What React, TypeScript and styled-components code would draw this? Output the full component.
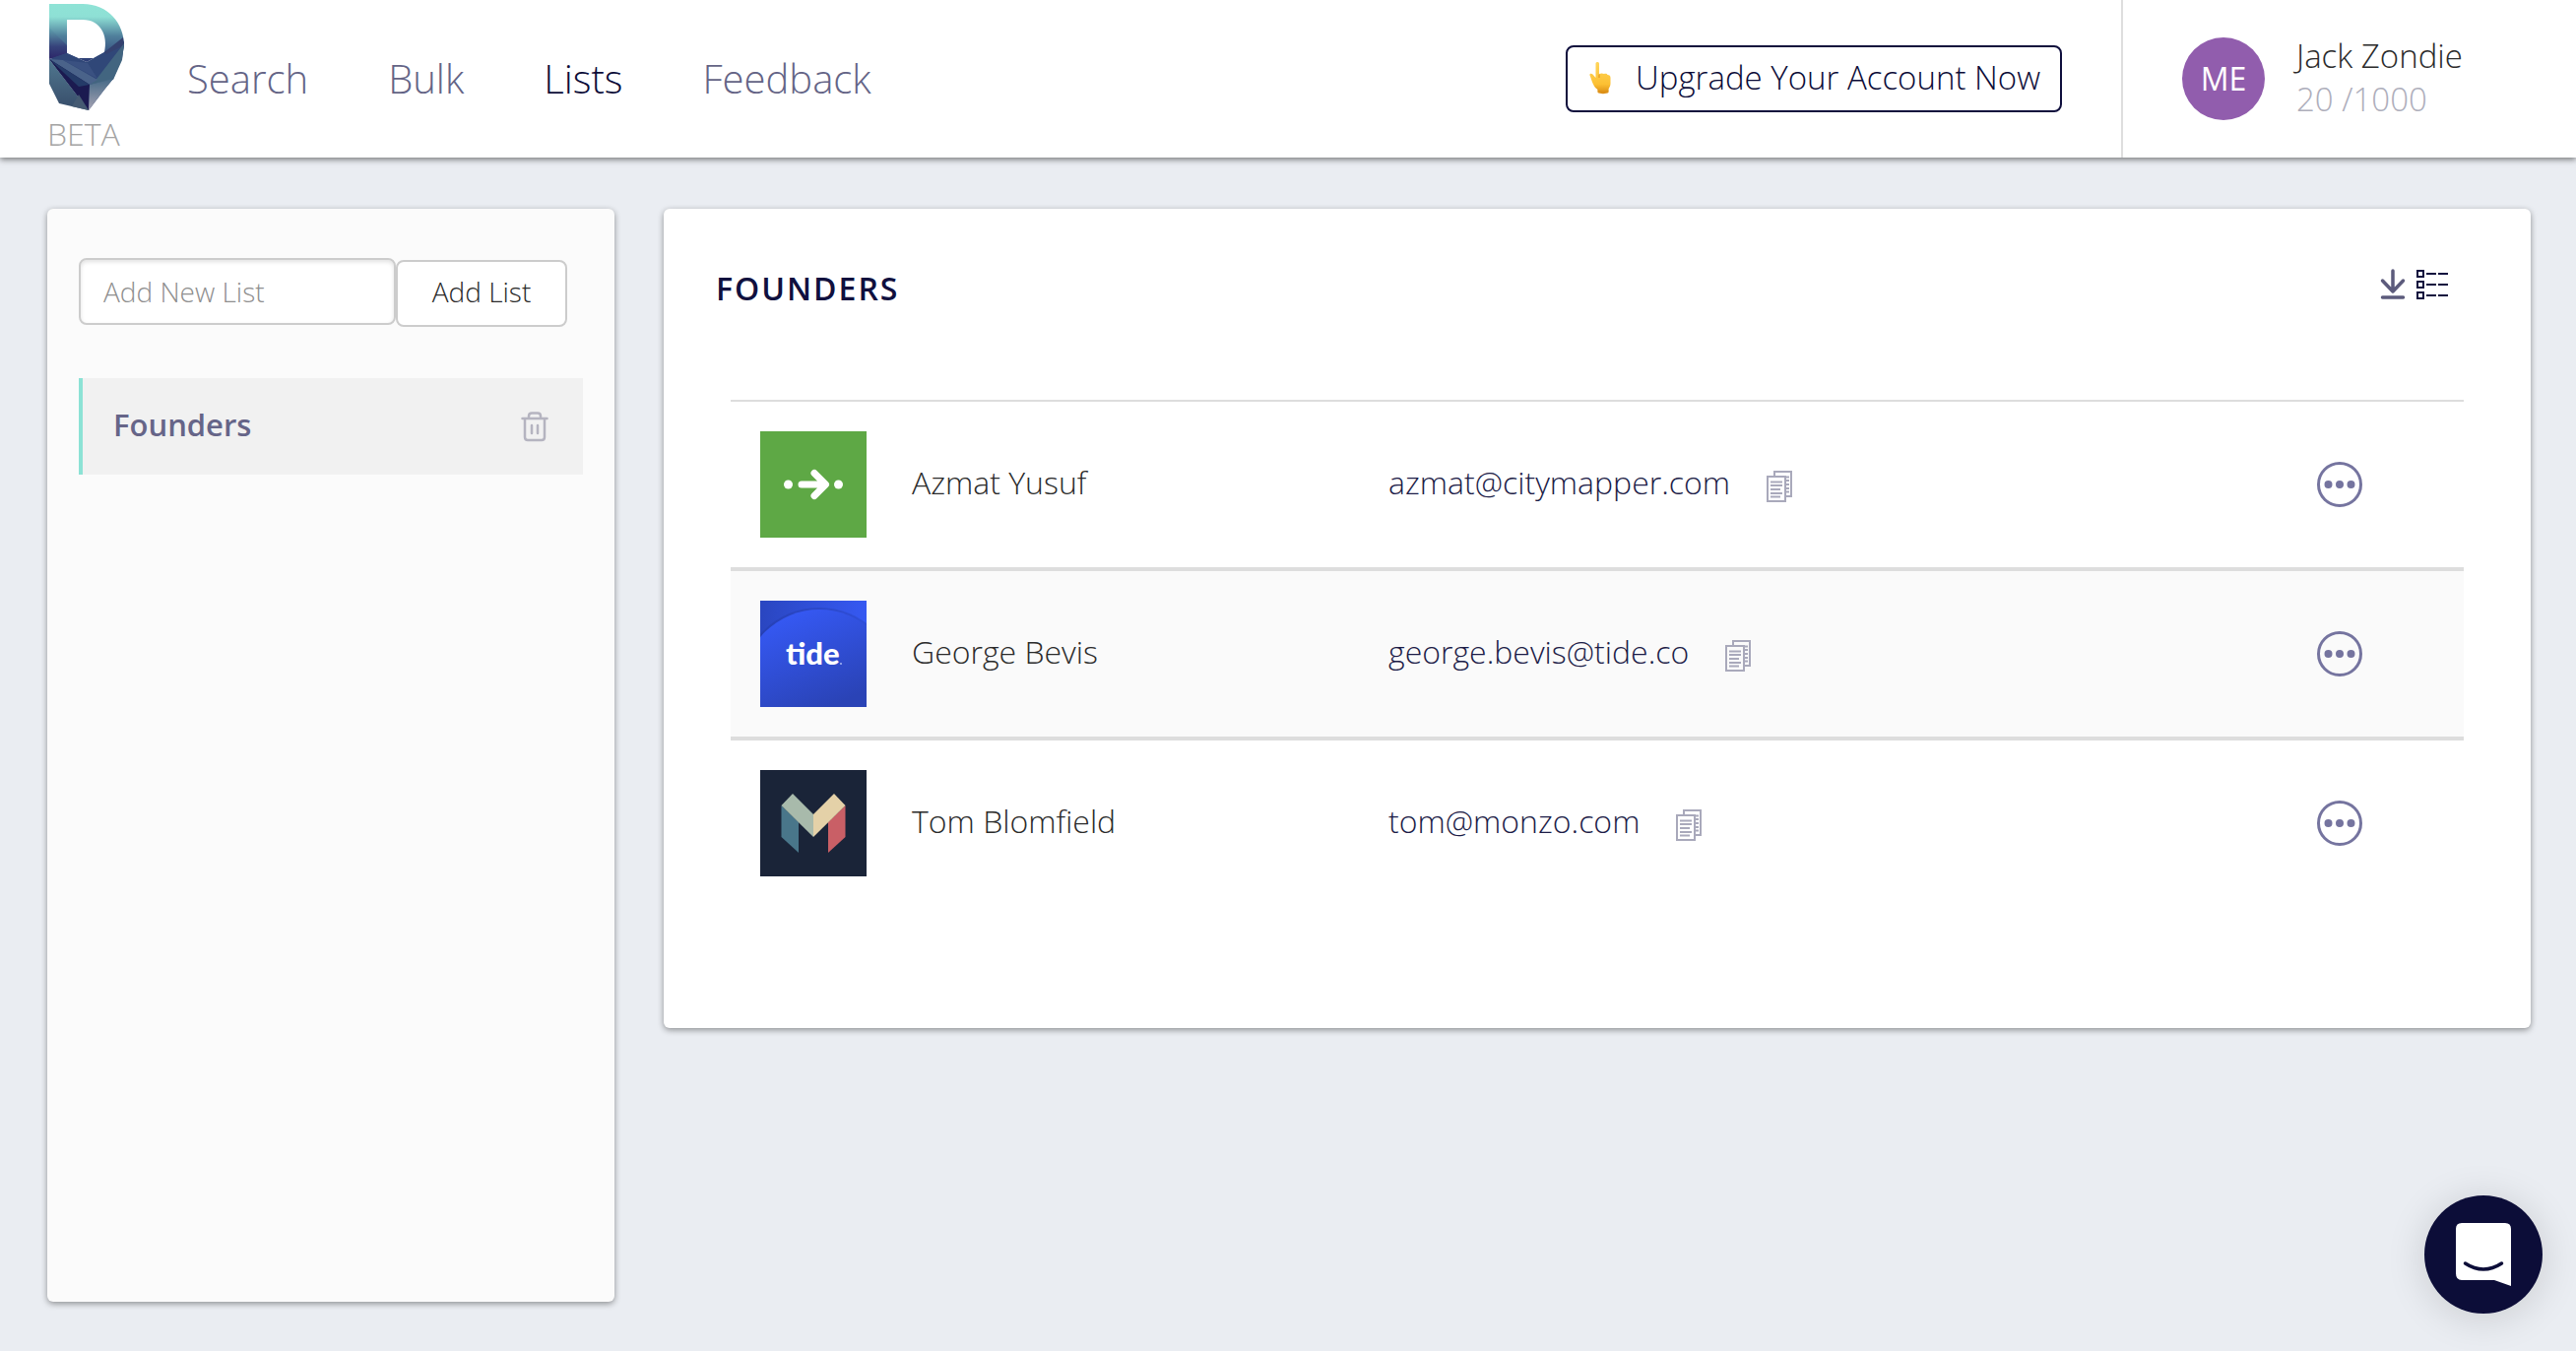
import React from "react";
import styled, { createGlobalStyle } from "styled-components";

const GlobalStyle = createGlobalStyle`
  *, *::before, *::after { box-sizing: border-box; }
  body {
    margin: 0;
    background: #eaedf2;
    color: #2b2b2b;
    font-family: "Open Sans", "Noto Sans", sans-serif;
    font-size: 32px;
    font-weight: 300;
    line-height: 44px;
  }
  button, input { font: inherit; color: inherit; }
  button { cursor: pointer; }
  svg { display: block; }
`;

const shadow = "0 2px 6px rgba(0, 0, 0, 0.4)";

const Page = styled.div`
  display: flex;
  flex-direction: column;
  min-height: 100vh;
`;

const Header = styled.header`
  display: flex;
  align-items: stretch;
  height: 160px;
  background: #ffffff;
  box-shadow: 0 2px 6px rgba(0, 0, 0, 0.5);
`;

const Brand = styled.a`
  display: flex;
  flex-direction: column;
  gap: 1px;
  width: 139px;
  padding: 4px 0 0 50px;
  color: #a4a4a4;
  text-decoration: none;
`;

const BrandLabel = styled.span`
  margin-left: -2px;
`;

const Nav = styled.nav`
  display: flex;
  flex: 1;
  align-items: center;
  gap: 81px;
  padding-left: 51px;
`;

const NavLink = styled.a<{ $active?: boolean }>`
  color: ${(p) => (p.$active ? "#0c0c38" : "#646486")};
  font-size: 40px;
  text-decoration: none;
`;

const UpgradeButton = styled.button`
  display: flex;
  align-items: center;
  align-self: center;
  justify-content: space-between;
  width: 504px;
  height: 68px;
  padding: 0 20px 2px 22px;
  border: 2px solid #0e0e3c;
  border-radius: 8px;
  background: #ffffff;
  color: #0c0c38;
  font-size: 33px;
`;

const Account = styled.div`
  display: flex;
  align-items: center;
  gap: 32px;
  width: 462px;
  margin-left: 60px;
  padding-left: 60px;
  border-left: 2px solid #dedede;
`;

const Avatar = styled.span`
  display: flex;
  align-items: center;
  justify-content: center;
  width: 84px;
  height: 84px;
  border-radius: 50%;
  background: #915dad;
  color: #ffffff;
  font-weight: 400;
`;

const Owner = styled.div`
  padding-bottom: 2px;
  font-size: 33px;
`;

const Credits = styled.div`
  color: #aeaebb;
`;

const Content = styled.main`
  display: grid;
  flex: 1;
  grid-template-columns: 576px minmax(0, 1fr);
  gap: 50px;
  padding: 52px 46px 50px 48px;
`;

const Sidebar = styled.aside`
  padding: 50px 32px;
  border-radius: 6px;
  background: #fbfbfb;
  box-shadow: ${shadow};
`;

const AddForm = styled.form`
  display: flex;
`;

const ListInput = styled.input`
  width: 322px;
  height: 68px;
  padding: 0 23px;
  border: 2px solid #cccccc;
  border-radius: 8px;
  background: #ffffff;
  box-shadow: inset 0 2px 4px rgba(0, 0, 0, 0.12);
  font-size: 28px;
  &::placeholder { color: #8f8f8f; opacity: 1; }
`;

const AddButton = styled.button`
  width: 174px;
  height: 68px;
  margin-top: 2px;
  padding: 0 0 4px;
  border: 2px solid #cccccc;
  border-radius: 8px;
  background: #ffffff;
  font-size: 28px;
`;

const Lists = styled.ul`
  margin: 52px 0 0;
  padding: 0;
  list-style: none;
`;

const ListItem = styled.li`
  display: flex;
  align-items: center;
  justify-content: space-between;
  height: 98px;
  padding: 0 35px 0 31px;
  border-left: 4px solid #8ce2d5;
  background: #f1f1f1;
`;

const ListLink = styled.a`
  padding-bottom: 4px;
  color: #666588;
  font-size: 31px;
  font-weight: 600;
  text-decoration: none;
`;

const IconButton = styled.button`
  display: flex;
  padding: 0;
  border: 0;
  background: none;
`;

const Card = styled.section`
  align-self: start;
  padding: 54px 68px 124px;
  border-radius: 6px;
  background: #ffffff;
  box-shadow: ${shadow};
`;

const CardHeader = styled.div`
  display: flex;
  align-items: center;
  justify-content: space-between;
  height: 54px;
  margin: 0 16px 86px -15px;
`;

const Title = styled.h1`
  margin: 0;
  color: #10103e;
  font-size: 32px;
  font-weight: 600;
  letter-spacing: 2px;
`;

const Tools = styled.div`
  display: flex;
  gap: 11px;
  padding-bottom: 8px;
`;

const Table = styled.table`
  width: 100%;
  border-top: 2px solid #dddddd;
  border-spacing: 0;
  table-layout: fixed;
`;

const LogoColumn = styled.col` width: 184px; `;
const NameColumn = styled.col` width: 27.5%; `;
const ActionColumn = styled.col` width: 149px; `;

const Row = styled.tr`
  &:nth-child(even) { background: #fafafa; }
  &:not(:last-child) > td { border-bottom: 4px solid #dddddd; }
`;

const Cell = styled.td`
  padding: 0;
`;

const LogoCell = styled(Cell)`
  padding: 30px;
`;

const NameCell = styled(Cell)`
  padding-bottom: 4px;
`;

const Email = styled.div`
  display: flex;
  align-items: flex-end;
  gap: 37px;
`;

const EmailLink = styled.a`
  padding-bottom: 4px;
  color: #1d1d48;
  text-decoration: none;
`;

const CopyButton = styled(IconButton)`
  padding-bottom: 6px;
`;

const Tile = styled.div<{ $bg: string }>`
  display: flex;
  align-items: center;
  justify-content: center;
  width: 108px;
  height: 108px;
  background: ${(p) => p.$bg};
`;

const TideWord = styled.text`
  fill: #ffffff;
  font-family: Lato, sans-serif;
  font-size: 31px;
  font-weight: 900;
`;

const Launcher = styled.button`
  position: fixed;
  right: 34px;
  bottom: 38px;
  display: flex;
  align-items: center;
  justify-content: center;
  width: 120px;
  height: 120px;
  padding: 0;
  border: 0;
  border-radius: 50%;
  background: #0c0d38;
  box-shadow: 0 4px 40px rgba(0, 0, 0, 0.14);
`;

const BrandLogo = () => (
  <svg width="76" height="109" viewBox="0 0 76 109" aria-hidden="true">
    <defs>
      <linearGradient id="brand-d" x1="0" y1="0" x2="0" y2="1">
        <stop offset="0" stopColor="#8fe3d6" />
        <stop offset="0.22" stopColor="#8ee0d5" />
        <stop offset="0.55" stopColor="#50809c" />
        <stop offset="1" stopColor="#2b3a73" />
      </linearGradient>
      <linearGradient id="brand-l" x1="0" y1="0" x2="0" y2="1">
        <stop offset="0" stopColor="#62a5b0" />
        <stop offset="0.6" stopColor="#36437b" />
        <stop offset="1" stopColor="#2c2669" />
      </linearGradient>
      <linearGradient id="brand-s" x1="0" y1="0" x2="0" y2="1">
        <stop offset="0" stopColor="#507890" />
        <stop offset="1" stopColor="#374c69" />
      </linearGradient>
      <linearGradient id="brand-t" x1="0" y1="0" x2="0" y2="1">
        <stop offset="0" stopColor="#456987" />
        <stop offset="1" stopColor="#a7a4b3" />
      </linearGradient>
    </defs>
    <path d="M0 0H34C60 0 76 20 76 42L74 55H0ZM18 16V50L38 59L56 49C60 32 52 16 34 16Z" fill="url(#brand-d)" fillRule="evenodd" />
    <path d="M0 24L18 42V50L0 56Z" fill="url(#brand-l)" />
    <path d="M0 56L18 50L38 59L56 49L76 38V42L73 57L65 76L56 87L40 108L0 56Z" fill="#304778" />
    <path d="M56 49L75 34L76 42L58 51Z" fill="#34416f" />
    <path d="M76 40L49 75L41 82L65 77L74 57Z" fill="#426580" />
    <path d="M0 56L14 57L49 77L41 82Z" fill="#4a638a" />
    <path d="M14 57L39 60L49 76Z" fill="#3a5181" />
    <path d="M0 56V81L10 101L40 108Z" fill="url(#brand-s)" />
    <path d="M0 56L41 82L40 108Z" fill="#1b1a50" />
    <path d="M0 56L41 82L30 84Z" fill="#243b68" />
    <path d="M30 92L40 108L23 104Z" fill="#455a72" />
    <path d="M41 82L65 76L56 87L40 108Z" fill="url(#brand-t)" />
  </svg>
);

const HandIcon = () => (
  <svg width="22" height="34" viewBox="0 0 22 34" aria-hidden="true">
    <defs>
      <linearGradient id="hand" x1="0" y1="0" x2="0" y2="1">
        <stop offset="0" stopColor="#ffd65c" />
        <stop offset="0.7" stopColor="#fcc033" />
        <stop offset="1" stopColor="#d98a12" />
      </linearGradient>
    </defs>
    <path d="M6.500 2.500C6.500 0.500 10 0.500 10 2.500V13C12 12 14 12.500 15 13C17 12.500 18 13 18.500 14C20.500 14 21.500 15 21.500 17V23C21.500 26 19.500 27 19.500 29V32C17 33.500 11 33.500 8.500 32V29C4 26 3 21 0.500 14.500C0 12.500 2 12 3.500 13.500L6.500 17Z" fill="url(#hand)" />
    <path d="M10 13.500V17M8.500 30C12 31 16 31 19.500 30" fill="none" stroke="#dd9218" strokeWidth="1" />
  </svg>
);

const TrashIcon = () => (
  <svg width="28" height="31" viewBox="0 0 28 31" fill="none" stroke="#b5b4c0" strokeWidth="2.500" strokeLinecap="round" aria-hidden="true">
    <path d="M1.500 7H26.500M8 7V4.500Q8 1.500 11 1.500H17Q20 1.500 20 4.500V7M4 8V26Q4 29 7 29H21Q24 29 24 26V8M11 14V22M17 14V22" />
  </svg>
);

const DownloadIcon = () => (
  <svg width="26" height="32" viewBox="0 0 26 32" fill="none" stroke="#5c5b7c" strokeWidth="3.500" strokeLinecap="round" strokeLinejoin="round" aria-hidden="true">
    <path d="M13 2V23M2.500 12L13 23L23.500 12M2.500 29H23.500" />
  </svg>
);

const TableIcon = () => (
  <svg width="32" height="32" viewBox="0 0 32 32" fill="none" stroke="#10103e" strokeWidth="2" aria-hidden="true">
    <path d="M1 2H7V8H1ZM1 13H7V19H1ZM1 24H7V30H1Z" />
    <path d="M10 5H20M22 5H32M10 16H20M22 16H32M10 27H20M22 27H32" />
  </svg>
);

const CopyIcon = () => (
  <svg width="26" height="32" viewBox="0 0 26 32" fill="none" stroke="#a9a9bb" strokeWidth="2" aria-hidden="true">
    <path d="M8 5V1H25V26H20M1 6H19V31H1Z" />
    <path d="M4 11.500H16M4 15H16M4 19H14M4 23H16M4 26.500H14M20 6.500H23M20 10H23M20 14H23M20 18H23M20 21.500H23" />
  </svg>
);

const MoreIcon = () => (
  <svg width="46" height="46" viewBox="0 0 46 46" aria-hidden="true">
    <circle cx="23" cy="23" r="21.500" fill="none" stroke="#75749f" strokeWidth="3" />
    <path d="M11.500 23h.01M23 23h.01M34.500 23h.01" stroke="#75749f" strokeWidth="8" strokeLinecap="round" />
  </svg>
);

const CitymapperLogo = () => (
  <Tile $bg="#5ea845">
    <svg width="60" height="32" viewBox="0 0 60 32" aria-hidden="true">
      <circle cx="4.500" cy="16" r="4.500" fill="#fff" />
      <circle cx="55.500" cy="16" r="4.500" fill="#fff" />
      <path d="M18 16H42M31 4.500L42.500 16L31 27.500" fill="none" stroke="#fff" strokeWidth="7" strokeLinecap="round" strokeLinejoin="round" />
    </svg>
  </Tile>
);

const TideLogo = () => (
  <Tile $bg="linear-gradient(90deg, #2a46c0, #3659f2)">
    <svg width="108" height="108" viewBox="0 0 108 108">
      <defs>
        <linearGradient id="tide" gradientUnits="userSpaceOnUse" x1="30" y1="15" x2="70" y2="108">
          <stop offset="0" stopColor="#3558f2" />
          <stop offset="1" stopColor="#2a43b6" />
        </linearGradient>
      </defs>
      <circle cx="60" cy="87" r="80" fill="#1d3190" opacity="0.25" />
      <circle cx="60" cy="87" r="78" fill="url(#tide)" />
      <TideWord x="26" y="65">tide</TideWord>
      <circle cx="82" cy="64" r="1" fill="#a9b8f5" />
    </svg>
  </Tile>
);

const MonzoLogo = () => (
  <Tile $bg="#1a2438">
    <svg width="66" height="60" viewBox="0 0 66 60" aria-hidden="true">
      <path d="M0.500 12L18 29V60L0.500 44Z" fill="#49768a" />
      <path d="M65.500 12L48 29V60L65.500 44Z" fill="#c95f66" />
      <path d="M12 0L33 21V44L0.500 12Z" fill="#a8baab" />
      <path d="M54 0L33 21V44L65.500 12Z" fill="#e4d1a8" />
    </svg>
  </Tile>
);

const contacts = [
  { name: "Azmat Yusuf", email: "azmat@citymapper.com", Logo: CitymapperLogo },
  { name: "George Bevis", email: "george.bevis@tide.co", Logo: TideLogo },
  { name: "Tom Blomfield", email: "tom@monzo.com", Logo: MonzoLogo },
];

const links = ["Search", "Bulk", "Lists", "Feedback"];

export default function App() {
  return (
    <Page>
      <GlobalStyle />
      <Header>
        <Brand href="#">
          <BrandLogo />
          <BrandLabel>BETA</BrandLabel>
        </Brand>
        <Nav>
          {links.map((label) => (
            <NavLink key={label} href="#" $active={label === "Lists"}>{label}</NavLink>
          ))}
        </Nav>
        <UpgradeButton type="button">
          <HandIcon />
          <span>Upgrade Your Account Now</span>
        </UpgradeButton>
        <Account>
          <Avatar>ME</Avatar>
          <Owner>
            <div>Jack Zondie</div>
            <Credits>20 /1000</Credits>
          </Owner>
        </Account>
      </Header>
      <Content>
        <Sidebar>
          <AddForm onSubmit={(e) => e.preventDefault()}>
            <ListInput aria-label="Add New List" placeholder="Add New List" />
            <AddButton type="submit">Add List</AddButton>
          </AddForm>
          <Lists>
            <ListItem>
              <ListLink href="#">Founders</ListLink>
              <IconButton type="button" aria-label="Delete list"><TrashIcon /></IconButton>
            </ListItem>
          </Lists>
        </Sidebar>
        <Card>
          <CardHeader>
            <Title>FOUNDERS</Title>
            <Tools>
              <IconButton type="button" aria-label="Download"><DownloadIcon /></IconButton>
              <IconButton type="button" aria-label="Table view"><TableIcon /></IconButton>
            </Tools>
          </CardHeader>
          <Table>
            <colgroup>
              <LogoColumn />
              <NameColumn />
              <col />
              <ActionColumn />
            </colgroup>
            <tbody>
              {contacts.map(({ name, email, Logo }) => (
                <Row key={name}>
                  <LogoCell><Logo /></LogoCell>
                  <NameCell>{name}</NameCell>
                  <Cell>
                    <Email>
                      <EmailLink href={`mailto:${email}`}>{email}</EmailLink>
                      <CopyButton type="button" aria-label={`Copy ${email}`}><CopyIcon /></CopyButton>
                    </Email>
                  </Cell>
                  <Cell>
                    <IconButton type="button" aria-label={`More actions for ${name}`}><MoreIcon /></IconButton>
                  </Cell>
                </Row>
              ))}
            </tbody>
          </Table>
        </Card>
      </Content>
      <Launcher type="button" aria-label="Open chat">
        <svg width="56" height="64" viewBox="0 0 56 64" aria-hidden="true">
          <path d="M6 0H50Q56 0 56 6V64L39 58H6Q0 58 0 51V6Q0 0 6 0Z" fill="#fff" />
          <path d="M9.500 41Q28 53 46.500 41" fill="none" stroke="#0c0d38" strokeWidth="3.500" strokeLinecap="round" />
        </svg>
      </Launcher>
    </Page>
  );
}
